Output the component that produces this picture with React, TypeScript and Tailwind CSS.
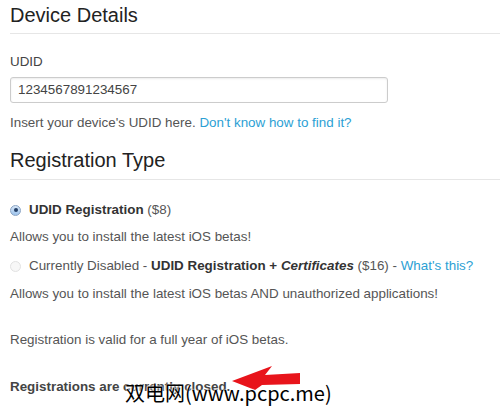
const Radio = ({ checked }: { checked?: boolean }) => (
  <span
    className={
      checked
        ? "inline-flex items-center justify-center w-[11px] h-[11px] rounded-full border border-[#8aa4c4] bg-gradient-to-b from-[#d7e6f7] to-[#9cc3ec] shrink-0"
        : "inline-flex w-[11px] h-[11px] rounded-full border border-[#e2e2e2] bg-[#f7f7f7] shrink-0"
    }
  >
    {checked && <span className="w-[4px] h-[4px] rounded-full bg-[#233f66]" />}
  </span>
);

export default function App() {
  return (
    <div className="relative w-[500px] h-[416px] overflow-hidden bg-white font-['Liberation_Sans',Arial,sans-serif] text-[13.4px] text-[#555]">
      <div className="pl-[10px]">
        <h2 className="pt-[3px] pb-[6px] text-[20px] leading-[24px] text-[#222] border-b border-[#e6e6e6]">
          Device Details
        </h2>

        <label className="block mt-[20px] leading-[16px] text-[#444]">UDID</label>
        <div className="mt-[7px] w-[378px] h-[26px] flex items-center px-[7px] rounded-[3px] border border-[#ccc] shadow-[inset_0_1px_2px_rgba(0,0,0,0.08)] text-[#444]">
          1234567891234567
        </div>
        <p className="mt-[12px] leading-[16px]">
          Insert your device's UDID here.{" "}
          <a className="text-[#2c9fd4]">Don't know how to find it?</a>
        </p>

        <h2 className="mt-[14px] pt-[3px] pb-[7px] text-[20px] leading-[24px] text-[#222] border-b border-[#e6e6e6]">
          Registration Type
        </h2>

        <div className="mt-[22px] flex items-center gap-[8px] leading-[16px]">
          <Radio checked />
          <span className="text-[#333]">
            <b>UDID Registration</b> <span className="text-[#555]">($8)</span>
          </span>
        </div>
        <p className="mt-[11px] leading-[16px]">Allows you to install the latest iOS betas!</p>

        <div className="mt-[13px] flex items-center gap-[8px] leading-[16px]">
          <Radio />
          <span>
            Currently Disabled - <b className="text-[#333]">UDID Registration + <i>Certificates</i></b> ($16) -{" "}
            <a className="text-[#2c9fd4]">What's this?</a>
          </span>
        </div>
        <p className="mt-[12px] leading-[16px]">
          Allows you to install the latest iOS betas AND unauthorized applications!
        </p>

        <p className="mt-[30px] leading-[16px]">Registration is valid for a full year of iOS betas.</p>

        <p className="mt-[31px] leading-[16px] font-bold text-[#444]">Registrations are currently closed.</p>
      </div>

      {/* watermark */}
      <svg className="absolute left-[228px] top-[362px]" width="76" height="32" viewBox="0 0 76 32">
        <polygon points="4,19 44,4 37,13 72,11 72,22 34,23 27,28" fill="#e8141b" />
      </svg>
      <div className="absolute left-[125px] top-[381px] text-[20px] leading-[24px] text-black font-['Noto_Sans_CJK_SC',sans-serif] [text-shadow:0_0_2px_#fff,0_0_2px_#fff]">
        双电网(www.pcpc.me)
      </div>
    </div>
  );
}
